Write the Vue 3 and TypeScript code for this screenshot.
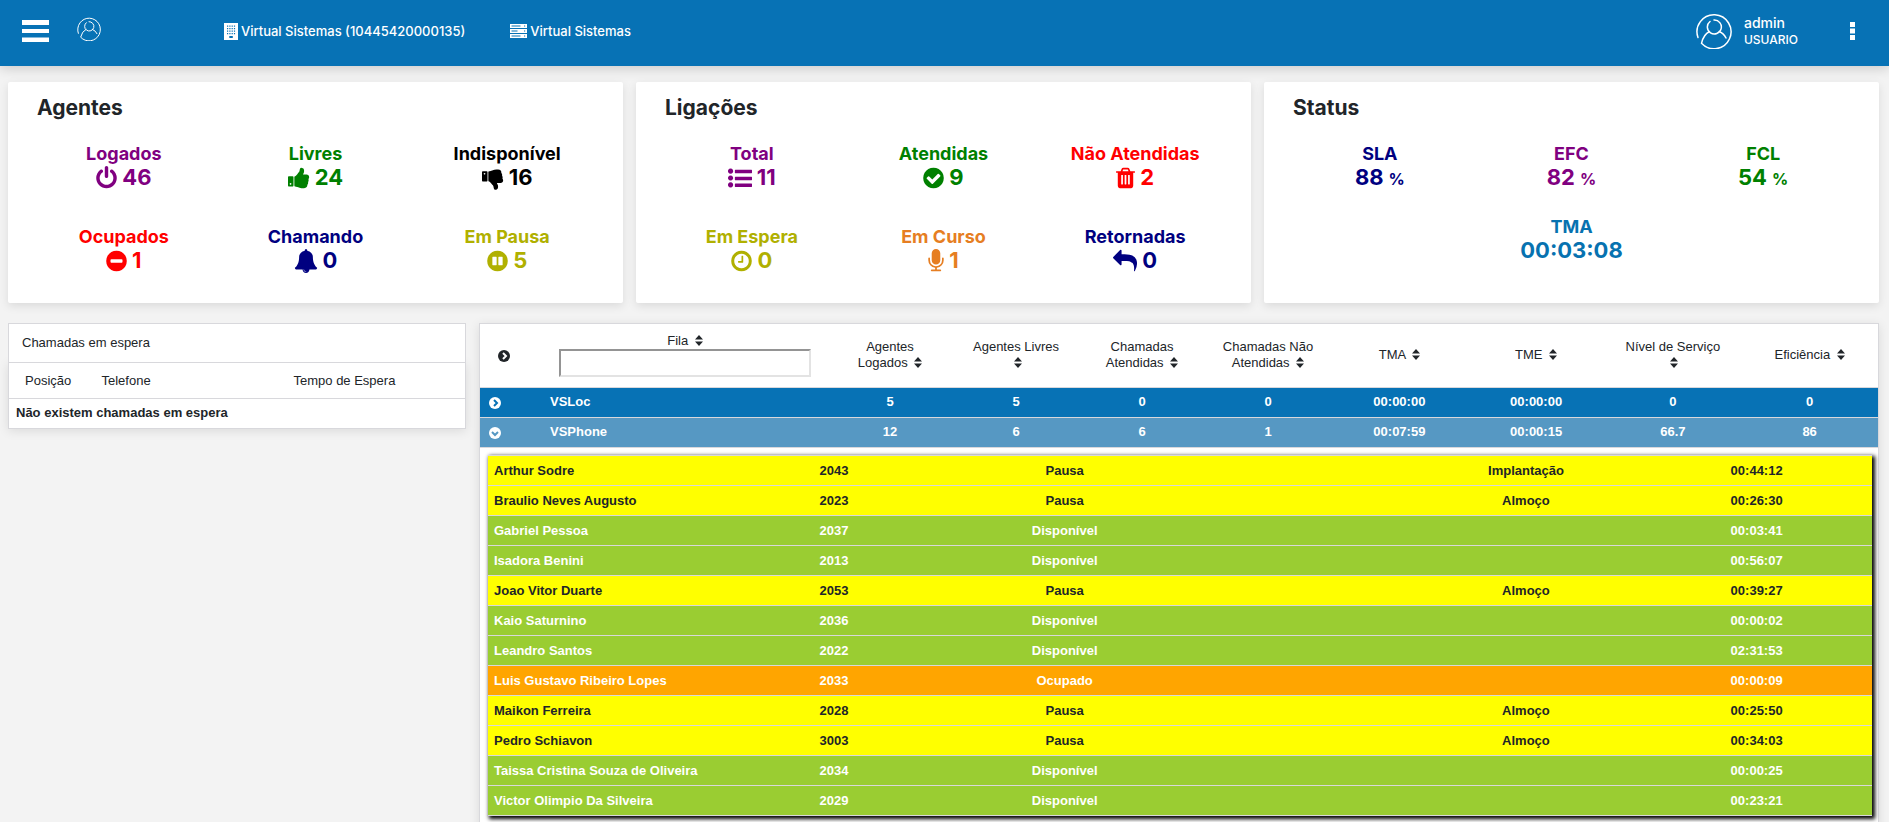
<script setup lang="ts">
import { ref } from 'vue'

interface Shape { box: string; w: number; d: string }
interface Stat { label: string; value: string; tone: string; icon?: string; unit?: string }
interface Queue { name: string; open: boolean; values: string[] }
interface Agent { name: string; ext: string; state: string; reason: string; time: string }

const disc = 'M1664 896q0 209-103 385.5t-279.5 279.5-385.5 103-385.5-103-279.5-279.5-103-385.5 103-385.5 279.5-279.5 385.5-103 385.5 103 279.5 279.5 103 385.5z'

const shapes: Record<string, Shape> = {
  power: { box: '128 0 1536 1792', w: 21, d: 'M1664 896q0 156-61 298t-164 245-245 164-298 61-298-61-245-164-164-245-61-298q0-182 80.5-343t226.5-270q43-32 95.5-25t83.5 50q32 42 24.5 94.5t-49.5 84.5q-98 74-151.5 181t-53.5 228q0 104 40.5 198.5t109.5 163.5 163.5 109.5 198.5 40.5 198.5-40.5 163.5-109.5 109.5-163.5 40.5-198.5q0-121-53.5-228t-151.5-181q-42-32-49.5-84.5t24.5-94.5q31-43 84-50t95 25q146 109 226.5 270t80.5 343zm-640-768v640q0 52-38 90t-90 38-90-38-38-90v-640q0-52 38-90t90-38 90 38 38 90z' },
  up: { box: '64 0 1664 1792', w: 22, d: 'M320 1344q0-26-19-45t-45-19q-27 0-45.5 19t-18.5 45q0 27 18.5 45.5t45.5 18.5q26 0 45-18.5t19-45.5zm160-512v640q0 26-19 45t-45 19h-288q-26 0-45-19t-19-45v-640q0-26 19-45t45-19h288q26 0 45 19t19 45zm1184 0q0 86-55 149 15 44 15 76 3 76-43 137 17 56 0 117-15 57-54 94 9 112-49 181-64 76-197 78h-129q-66 0-144-15.5t-121.5-29-120.5-39.5q-123-43-158-44-26-1-45-19.5t-19-44.5v-641q0-25 18-43.5t43-20.5q24-2 76-59t101-121q68-87 101-120 18-18 31-48t17.5-48.5 13.5-60.5q7-39 12.5-61t19.5-52 34-50q19-19 45-19 46 0 82.5 10.5t60 26 40 40.5 24 45 12 50 5 45 .5 39q0 38-9.5 76t-19 60-27.5 56q-3 6-10 18t-11 22-8 24h277q78 0 135 57t57 135z' },
  down: { box: '64 0 1664 1792', w: 22, d: 'M320 576q0 26-19 45t-45 19q-27 0-45.5-19t-18.5-45q0-27 18.5-45.5t45.5-18.5q26 0 45 18.5t19 45.5zm160 512v-640q0-26-19-45t-45-19h-288q-26 0-45 19t-19 45v640q0 26 19 45t45 19h288q26 0 45-19t19-45zm1129-149q55 61 55 149-1 78-57.5 135t-134.5 57h-277q4 14 8 24t11 22 10 18q18 37 27 57t19 58.5 10 76.5q0 24-.5 39t-5 45-12 50-24 45-40 40.5-60 26-82.5 10.5q-26 0-45-19-20-20-34-50t-19.5-52-12.5-61q-9-42-13.5-60.5t-17.5-48.5-31-48q-33-33-101-120-49-64-101-121t-76-59q-25-2-43-20.5t-18-43.5v-641q0-26 19-44.5t45-19.5q35-1 158-44 77-26 120.5-39.5t121.5-29 144-15.5h129q133 2 197 78 58 69 49 181 39 37 54 94 17 61 0 117 46 61 43 137 0 32-15 76z' },
  minus: { box: '128 0 1536 1792', w: 21, d: 'M1344 960v-128q0-26-19-45t-45-19h-768q-26 0-45 19t-19 45v128q0 26 19 45t45 19h768q26 0 45-19t19-45z' + disc },
  bell: { box: '0 0 1792 1792', w: 24, d: 'M912 1696q0-16-16-16-59 0-101.5-42.5t-42.5-101.5q0-16-16-16t-16 16q0 73 51.5 124.5t124.5 51.5q16 0 16-16zm816-288q0 52-38 90t-90 38h-448q0 106-75 181t-181 75-181-75-75-181h-448q-52 0-90-38t-38-90q50-42 91-88t85-119.5 74.5-158.5 50-206 19.5-260q0-152 117-282.5t307-158.5q-8-19-8-39 0-40 28-68t68-28 68 28 28 68q0 20-8 39 190 28 307 158.5t117 282.5q0 139 19.5 260t50 206 74.5 158.5 85 119.5 91 88z' },
  pause: { box: '128 0 1536 1792', w: 21, d: 'M544 576h256q32 0 32 32v576q0 32-32 32h-256q-32 0-32-32v-576q0-32 32-32zM992 576h256q32 0 32 32v576q0 32-32 32h-256q-32 0-32-32v-576q0-32 32-32z' + disc },
  list: { box: '0 0 1792 1792', w: 24, d: 'M192 1216a192 192 0 1 0 1 0zM192 704a192 192 0 1 0 1 0zM192 192a192 192 0 1 0 1 0zM544 1312h1216q32 0 32 32v192q0 32-32 32h-1216q-32 0-32-32v-192q0-32 32-32zM544 800h1216q32 0 32 32v192q0 32-32 32h-1216q-32 0-32-32v-192q0-32 32-32zM544 288h1216q32 0 32 32v192q0 32-32 32h-1216q-32 0-32-32v-192q0-32 32-32z' },
  check: { box: '128 0 1536 1792', w: 21, d: 'M1412 734q0-28-18-46l-91-90q-19-19-45-19t-45 19l-408 407-226-226q-19-19-45-19t-45 19l-91 90q-18 18-18 46 0 27 18 45l362 362q19 19 45 19 27 0 46-19l543-543q18-18 18-45z' + disc },
  trash: { box: '192 0 1408 1792', w: 19, d: 'M704 704v640q0 14-9 23t-23 9h-64q-14 0-23-9t-9-23v-640q0-14 9-23t23-9h64q14 0 23 9t9 23zM960 704v640q0 14-9 23t-23 9h-64q-14 0-23-9t-9-23v-640q0-14 9-23t23-9h64q14 0 23 9t9 23zM1216 704v640q0 14-9 23t-23 9h-64q-14 0-23-9t-9-23v-640q0-14 9-23t23-9h64q14 0 23 9t9 23zM672 384h448l-48-117q-7-9-17-11h-317q-10 2-17 11zm928 32v64q0 14-9 23t-23 9h-96v948q0 83-47 143.5t-113 60.5h-832q-66 0-113-58.5t-47-141.5v-952h-96q-14 0-23-9t-9-23v-64q0-14 9-23t23-9h309l70-167q15-37 54-63t79-26h320q40 0 79 26t54 63l70 167h309q14 0 23 9t9 23z' },
  clock: { box: '128 0 1536 1792', w: 21, d: 'M1024 544v448q0 14-9 23t-23 9h-320q-14 0-23-9t-9-23v-64q0-14 9-23t23-9h224v-352q0-14 9-23t23-9h64q14 0 23 9t9 23zm416 352q0-148-73-273t-198-198-273-73-273 73-198 198-73 273 73 273 198 198 273 73 273-73 198-198 73-273z' + disc },
  mic: { box: '320 0 1152 1792', w: 16, d: 'M1472 704v128q0 221-147.5 384.5t-364.5 187.5v132h256q26 0 45 19t19 45-19 45-45 19h-640q-26 0-45-19t-19-45 19-45 45-19h256v-132q-217-24-364.5-187.5t-147.5-384.5v-128q0-26 19-45t45-19 45 19 19 45v128q0 185 131.5 316.5t316.5 131.5 316.5-131.5 131.5-316.5v-128q0-26 19-45t45-19 45 19 19 45zm-256-384v512q0 132-94 226t-226 94-226-94-94-226v-512q0-132 94-226t226-94 226 94 94 226z' },
  reply: { box: '0 0 1792 1792', w: 24, d: 'M1792 1120q0 166-127 451-3 7-10.5 24t-13.5 30-13 22q-12 17-28 17-15 0-23.5-10t-8.5-25q0-9 2.5-26.5t2.5-23.5q5-68 5-123 0-101-17.5-181t-48.5-138.5-80-101-105.5-69.5-133-42.5-154-21.5-175.5-6h-224v256q0 26-19 45t-45 19-45-19l-512-512q-19-19-19-45t19-45l512-512q19-19 45-19t45 19 19 45v256h224q713 0 875 403 53 134 53 333z' }
}

const avatarPath = 'M2 24.5A17 17 0 1 1 5.500 30.300Q7.500 21.500 13.500 18.500M14 8.500A7 7 0 1 0 18 7M23 18.500Q28 20.500 30 25'

const panels: { title: string; stats: Stat[] }[] = [
  { title: 'Agentes', stats: [
    { label: 'Logados', value: '46', tone: 'purple', icon: 'power' },
    { label: 'Livres', value: '24', tone: 'green', icon: 'up' },
    { label: 'Indisponível', value: '16', tone: 'black', icon: 'down' },
    { label: 'Ocupados', value: '1', tone: 'red', icon: 'minus' },
    { label: 'Chamando', value: '0', tone: 'navy', icon: 'bell' },
    { label: 'Em Pausa', value: '5', tone: 'olive', icon: 'pause' }
  ] },
  { title: 'Ligações', stats: [
    { label: 'Total', value: '11', tone: 'purple', icon: 'list' },
    { label: 'Atendidas', value: '9', tone: 'green', icon: 'check' },
    { label: 'Não Atendidas', value: '2', tone: 'red', icon: 'trash' },
    { label: 'Em Espera', value: '0', tone: 'olive', icon: 'clock' },
    { label: 'Em Curso', value: '1', tone: 'orange', icon: 'mic' },
    { label: 'Retornadas', value: '0', tone: 'navy', icon: 'reply' }
  ] },
  { title: 'Status', stats: [
    { label: 'SLA', value: '88', tone: 'navy', unit: '%' },
    { label: 'EFC', value: '82', tone: 'purple', unit: '%' },
    { label: 'FCL', value: '54', tone: 'green', unit: '%' },
    { label: 'TMA', value: '00:03:08', tone: 'blue' }
  ] }
]

const columns: string[][] = [
  ['Agentes', 'Logados'], ['Agentes Livres', ''], ['Chamadas', 'Atendidas'], ['Chamadas Não', 'Atendidas'],
  ['TMA'], ['TME'], ['Nível de Serviço', ''], ['Eficiência']
]

const filter = ref('')
const queues = ref<Queue[]>([
  { name: 'VSLoc', open: false, values: ['5', '5', '0', '0', '00:00:00', '00:00:00', '0', '0'] },
  { name: 'VSPhone', open: true, values: ['12', '6', '6', '1', '00:07:59', '00:00:15', '66.7', '86'] }
])

const agents: Agent[] = [
  { name: 'Arthur Sodre', ext: '2043', state: 'Pausa', reason: 'Implantação', time: '00:44:12' },
  { name: 'Braulio Neves Augusto', ext: '2023', state: 'Pausa', reason: 'Almoço', time: '00:26:30' },
  { name: 'Gabriel Pessoa', ext: '2037', state: 'Disponível', reason: '', time: '00:03:41' },
  { name: 'Isadora Benini', ext: '2013', state: 'Disponível', reason: '', time: '00:56:07' },
  { name: 'Joao Vitor Duarte', ext: '2053', state: 'Pausa', reason: 'Almoço', time: '00:39:27' },
  { name: 'Kaio Saturnino', ext: '2036', state: 'Disponível', reason: '', time: '00:00:02' },
  { name: 'Leandro Santos', ext: '2022', state: 'Disponível', reason: '', time: '02:31:53' },
  { name: 'Luis Gustavo Ribeiro Lopes', ext: '2033', state: 'Ocupado', reason: '', time: '00:00:09' },
  { name: 'Maikon Ferreira', ext: '2028', state: 'Pausa', reason: 'Almoço', time: '00:25:50' },
  { name: 'Pedro Schiavon', ext: '3003', state: 'Pausa', reason: 'Almoço', time: '00:34:03' },
  { name: 'Taissa Cristina Souza de Oliveira', ext: '2034', state: 'Disponível', reason: '', time: '00:00:25' },
  { name: 'Victor Olimpio Da Silveira', ext: '2029', state: 'Disponível', reason: '', time: '00:23:21' }
]

const stateClass: Record<string, string> = { Pausa: 'paused', Disponível: 'free', Ocupado: 'busy' }
</script>

<template>
  <header class="topbar">
    <button class="plain" type="button" aria-label="Menu">
      <svg class="burger" viewBox="0 0 27 22"><path d="M0 0h27v5H0zM0 9h27v4H0zM0 17.500h27v4.500H0z" fill="#fff" /></svg>
    </button>
    <button class="plain profile" type="button" aria-label="Perfil">
      <svg class="avatar small" viewBox="0 0 36 36"><path :d="avatarPath" /></svg>
    </button>
    <nav class="links">
      <a href="#empresa">
        <svg class="building" viewBox="0 0 14 17"><path fill="#fff" fill-rule="evenodd" d="M0 0h14v17H0zM3 2.500h1.200v1.200H3zM5.300 2.500h1.200v1.200H5.300zM7.600 2.500h1.200v1.200H7.600zM9.900 2.500h1.200v1.200H9.900zM3 5h1.200v1.200H3zM5.300 5h1.200v1.200H5.300zM7.600 5h1.200v1.200H7.600zM9.900 5h1.200v1.200H9.900zM3 7.500h1.200v1.200H3zM5.300 7.500h1.200v1.200H5.300zM7.600 7.500h1.200v1.200H7.600zM9.900 7.500h1.200v1.200H9.900zM3 10h1.200v1.200H3zM5.300 10h1.200v1.200H5.300zM7.600 10h1.200v1.200H7.600zM9.900 10h1.200v1.200H9.900zM5.300 13h3.500v2H5.300z" /></svg>
        <span>Virtual Sistemas (10445420000135)</span>
      </a>
      <a href="#servidor">
        <svg class="server" viewBox="0 0 17 14"><path fill="#fff" fill-rule="evenodd" d="M0 0h17v4H0zM0 5h17v4H0zM0 10h17v4H0zM1.500 1.600h9v.8H1.500zM1.500 6.600h6v.8H1.500zM1.500 11.600h9v.8H1.500zM14 1.500h1.200v1h-1.200zM14 6.500h1.200v1h-1.200zM14 11.500h1.200v1h-1.200z" /></svg>
        <span>Virtual Sistemas</span>
      </a>
    </nav>
    <div class="user">
      <svg class="avatar" viewBox="0 0 36 36"><path :d="avatarPath" /></svg>
      <div class="who"><span class="login">admin</span><span>USUARIO</span></div>
    </div>
    <button class="plain" type="button" aria-label="Mais opções">
      <svg class="dots" viewBox="0 0 5 18"><path d="M0 0h5v5H0zM0 6.500h5v5H0zM0 13h5v5H0z" fill="#fff" /></svg>
    </button>
  </header>

  <main>
    <section class="panels">
      <article v-for="panel in panels" :key="panel.title" class="card">
        <h2>{{ panel.title }}</h2>
        <div class="stats" :class="{ compact: panel.title === 'Status' }">
          <div v-for="s in panel.stats" :key="s.label" class="stat" :class="s.tone">
            <div class="label">{{ s.label }}</div>
            <div class="value">
              <svg v-if="s.icon" :viewBox="shapes[s.icon].box" :width="shapes[s.icon].w" height="24" aria-hidden="true"><path :d="shapes[s.icon].d" fill="currentColor" fill-rule="evenodd" /></svg>
              <span>{{ s.value }}</span>
              <small v-if="s.unit">{{ s.unit }}</small>
            </div>
          </div>
        </div>
      </article>
    </section>

    <section class="board">
      <table class="box waiting">
        <caption>Chamadas em espera</caption>
        <thead><tr><th class="pos">Posição</th><th>Telefone</th><th class="wait">Tempo de Espera</th></tr></thead>
        <tbody><tr><td colspan="3">Não existem chamadas em espera</td></tr></tbody>
      </table>

      <div class="box queues">
        <table class="queue-table">
          <colgroup>
            <col class="c-toggle"><col class="c-name"><col v-for="n in 4" :key="n" class="c-count"><col span="4">
          </colgroup>
          <thead>
            <tr>
              <th class="toggle">
                <button class="plain" type="button" aria-label="Expandir todas">
                  <svg class="chevron" viewBox="0 0 12 12"><circle cx="6" cy="6" r="6" fill="currentColor" /><path class="gap" d="M5 3l3 3-3 3" /></svg>
                </button>
              </th>
              <th class="queue-filter">
                <label for="fila">Fila <svg class="sort" viewBox="0 0 8 11"><path d="M4 0l4 4.500H0zM4 11L0 6.500h8z" /></svg></label>
                <input id="fila" v-model="filter" type="text">
              </th>
              <th v-for="c in columns" :key="c.join(' ')">
                {{ c[0] }}<br v-if="c.length > 1"> {{ c[1] }}
                <svg class="sort" viewBox="0 0 8 11"><path d="M4 0l4 4.500H0zM4 11L0 6.500h8z" /></svg>
              </th>
            </tr>
          </thead>
          <tbody>
            <tr v-for="q in queues" :key="q.name" :class="{ open: q.open }">
              <td class="toggle">
                <button class="plain" type="button" :aria-label="'Alternar ' + q.name" @click="q.open = !q.open">
                  <svg class="chevron" viewBox="0 0 12 12"><circle cx="6" cy="6" r="6" fill="currentColor" /><path class="gap" :d="q.open ? 'M3 5l3 3 3-3' : 'M5 3l3 3-3 3'" /></svg>
                </button>
              </td>
              <td class="name">{{ q.name }}</td>
              <td v-for="(v, i) in q.values" :key="i">{{ v }}</td>
            </tr>
          </tbody>
        </table>

        <table class="agents">
          <tbody>
            <tr v-for="a in agents" :key="a.ext" :class="stateClass[a.state]">
              <td class="name">{{ a.name }}</td><td>{{ a.ext }}</td><td>{{ a.state }}</td><td></td><td>{{ a.reason }}</td><td>{{ a.time }}</td>
            </tr>
          </tbody>
        </table>
      </div>
    </section>
  </main>
</template>

<style>
body { background: #f3f3f3; overflow: hidden; }
</style>

<style scoped>
* { box-sizing: border-box; }
.plain { display: inline-flex; padding: 0; border: 0; background: none; color: inherit; cursor: pointer; }
.topbar {
  display: flex; align-items: center; height: 66px; padding: 0 34px 4px 22px;
  background: #0772b5; color: #fff; font-family: Inter, "Liberation Sans", sans-serif; font-size: 13px; font-weight: 500;
  box-shadow: 0 2px 12px rgba(0, 0, 0, .18);
}
.burger { width: 27px; height: 22px; }
.profile { margin-left: 28px; }
.avatar { width: 36px; height: 36px; fill: none; stroke: #fff; stroke-width: 1.5; stroke-linecap: round; }
.avatar.small { width: 24px; height: 24px; margin-bottom: 4px; }
.links { display: flex; gap: 45px; margin-left: 123px; }
.links a { display: flex; align-items: center; gap: 3px; color: #fff; text-decoration: none; }
.building { width: 14px; height: 17px; }
.server { width: 17px; height: 14px; }
.user { display: flex; align-items: center; gap: 12px; margin: 0 52px 0 auto; }
.who { display: flex; flex-direction: column; font-size: 12px; line-height: 17px; }
.login { font-size: 14px; }
.dots { width: 5px; height: 18px; }

main { padding: 16px 10px 20px 8px; }
.panels { display: grid; grid-template-columns: repeat(3, 1fr); gap: 13px; }
.card {
  padding: 14px 20px 30px; background: #fff; border-radius: 2px;
  box-shadow: 0 3px 10px rgba(0, 0, 0, .1); font-family: Inter, "Liberation Sans", sans-serif;
}
.card h2 { margin: 0 0 22px 9px; font-size: 21px; line-height: 24px; font-weight: 700; color: #212529; }
.stats { display: flex; flex-wrap: wrap; justify-content: center; row-gap: 35px; }
.stats.compact { row-gap: 25px; }
.stat { width: 33.333%; text-align: center; font-weight: 700; }
.label { font-size: 18px; line-height: 23px; }
.value { display: flex; justify-content: center; align-items: center; gap: 5px; height: 25px; font-size: 22px; line-height: 25px; }
.value small { font-size: 16px; line-height: 25px; }
.compact .value { align-items: baseline; }
.purple { color: #800080; }
.green { color: #008000; }
.black { color: #000; }
.red { color: #f00; }
.navy { color: #000080; }
.olive { color: #b0b000; }
.orange { color: #e67e22; }
.blue { color: #0772b0; }

.board {
  display: grid; grid-template-columns: 458fr 1400fr; gap: 13px; align-items: start; margin-top: 20px;
  font-family: "Liberation Sans", Arial, sans-serif; font-size: 13px; line-height: 16px; color: #212529;
}
.box { background: #fff; border: 1px solid #d8d8dc; box-shadow: 0 2px 10px rgba(0, 0, 0, .1); }
table { border-collapse: collapse; table-layout: fixed; width: 100%; }
th { font-weight: 400; }
td { font-weight: 700; }
.waiting caption { padding: 11px 13px; text-align: left; background: #fff; border: 1px solid #d8d8dc; border-bottom: 0; }
.waiting th { padding: 10px 0 9px; text-align: left; border-bottom: 1px solid #d8d8dc; }
.waiting th.pos { width: 93px; padding-left: 16px; }
.waiting th.wait { width: 172px; }
.waiting td { padding: 6px 7px 7px; }

.queues { padding-bottom: 12px; }
.c-toggle { width: 62px; }
.c-name { width: 285px; }
.c-count { width: 126px; }
.queue-table thead th { height: 63px; padding: 0 8px; vertical-align: middle; border-bottom: 1px solid #d8d8dc; }
.queue-table thead th.toggle { padding-left: 18px; text-align: left; }
.queue-table th.queue-filter { padding: 0 16px 0 17px; }
.queue-filter label { display: block; }
.queue-filter input {
  display: block; width: 100%; height: 28px; padding: 1px 4px; border: 2px solid; border-radius: 0; background: #fff;
  border-color: #949494 #e3e3e3 #e3e3e3 #949494; font: inherit;
}
.sort { width: 8px; height: 11px; margin-left: 3px; vertical-align: -1px; fill: currentColor; }
.queue-table td { height: 30px; padding: 0; text-align: center; color: #fff; background: #0772b5; border-bottom: 1px solid #d8d8dc; }
.queue-table .open td { background: #5698c3; }
.queue-table td.toggle { padding-left: 9px; text-align: left; }
.queue-table td.name { padding-left: 8px; text-align: left; }
.chevron { width: 12px; height: 12px; }
.gap { fill: none; stroke: #fff; stroke-width: 2; }
td .gap { stroke: #0772b5; }
.open .gap { stroke: #5698c3; }
.toggle .plain { vertical-align: middle; }

.agents { width: calc(100% - 14px); margin: 7px 6px 0 8px; box-shadow: 2px 2px 4px 1px #000; }
.agents td { height: 30px; padding: 1px 6px 0; text-align: center; border: solid #d8d8dc; border-width: 1px 0; }
.agents td.name { text-align: left; white-space: nowrap; }
.paused { background: #ff0; }
.free { background: #9acd32; color: #fff; }
.busy { background: #ffa500; color: #fff; }
</style>
